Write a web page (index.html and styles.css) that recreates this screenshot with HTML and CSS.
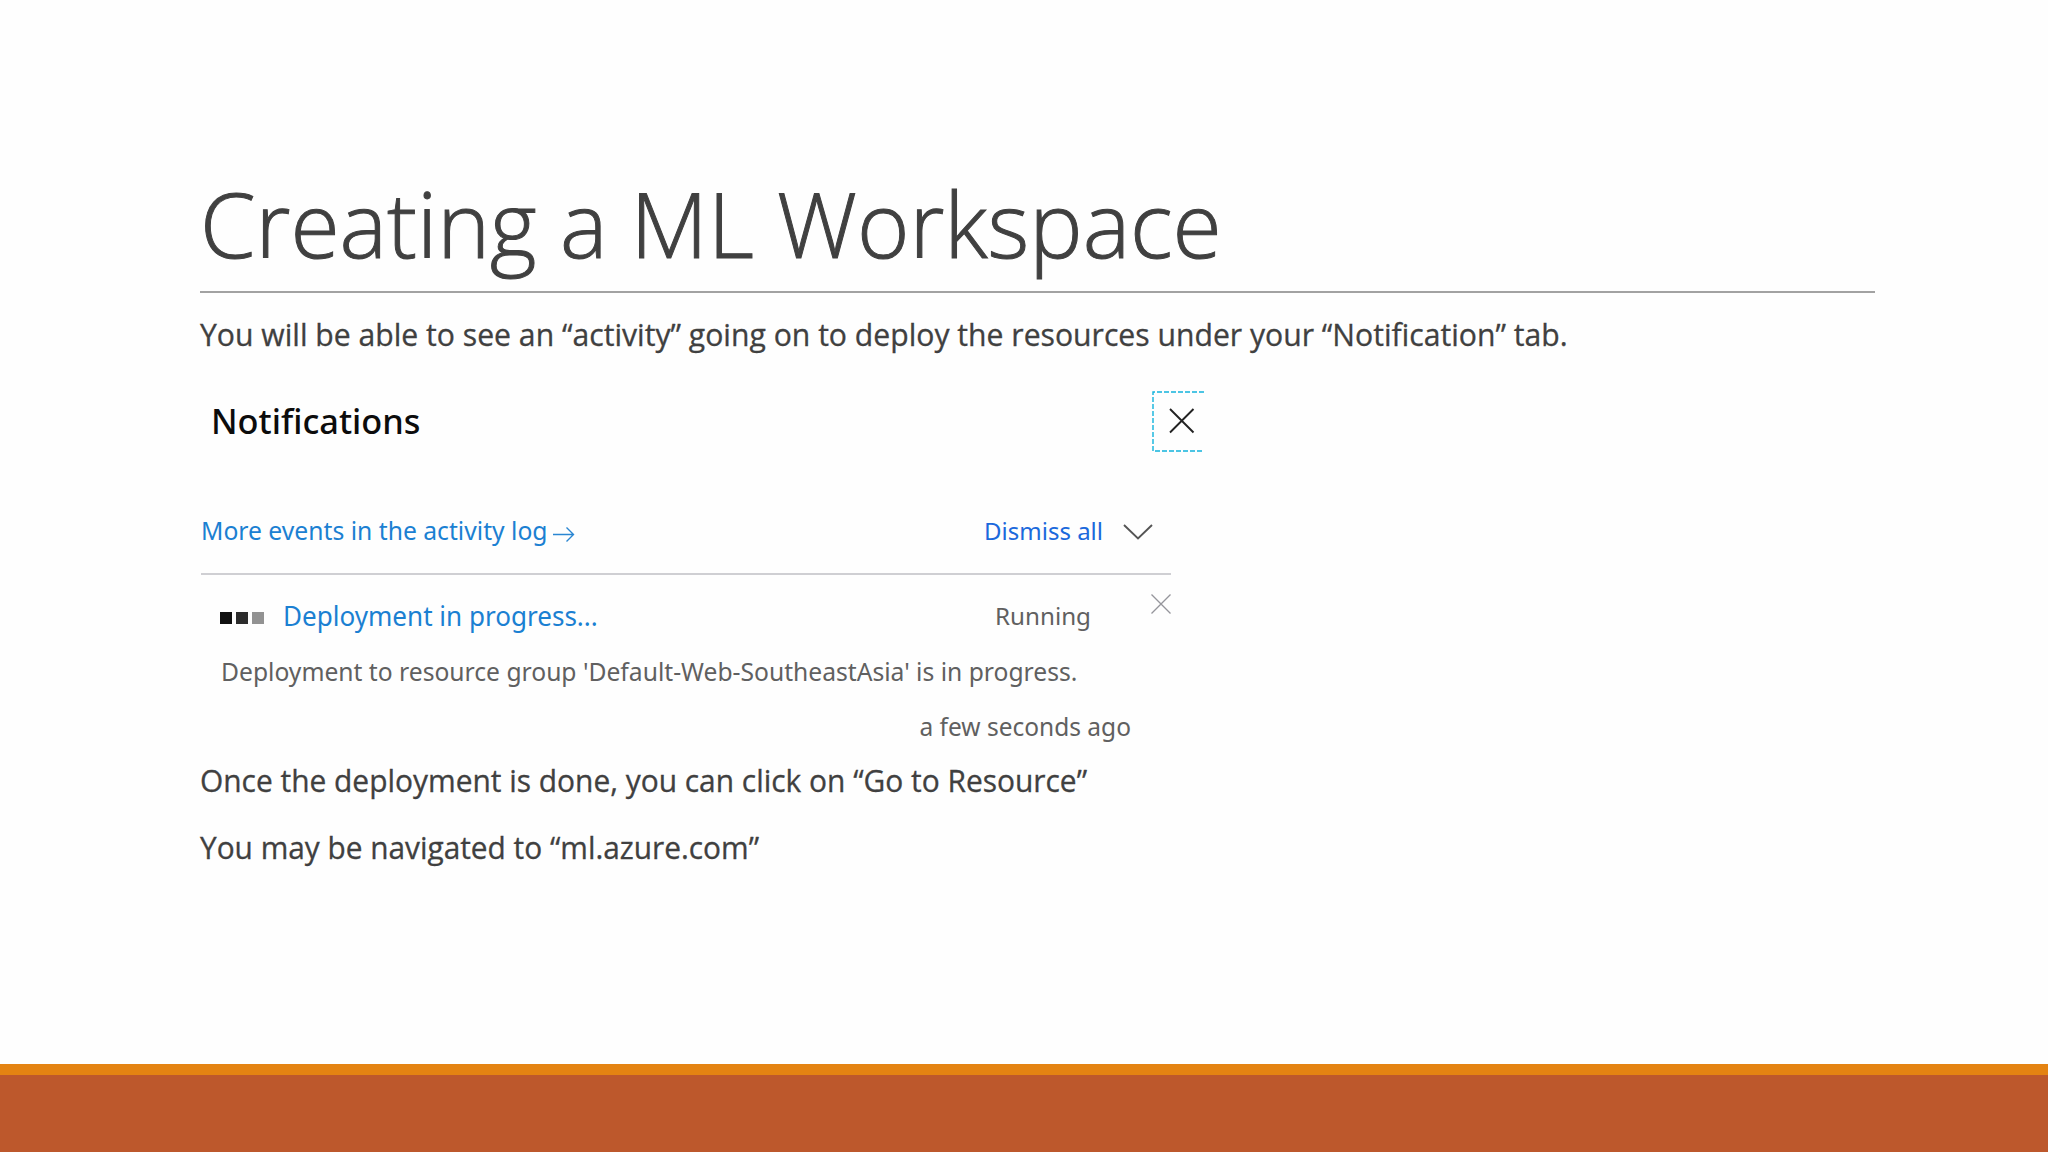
FILE: index.html
```
<!DOCTYPE html>
<html lang="en">
<head>
    <meta charset="UTF-8">
    <meta name="viewport" content="width=device-width, initial-scale=1.0">
    <title>Creating a ML Workspace</title>
    <link rel="stylesheet" href="styles.css">
</head>
<body>
    <main class="slide">
        <h1>Creating a ML Workspace</h1>

        <div class="content">
            <p class="intro">You will be able to see an “activity” going on to deploy the resources under your “Notification” tab.</p>

            <section class="notifications">
                <div class="panel-header">
                    <h2>Notifications</h2>
                    <div class="close-box">
                        <svg width="52" height="61" viewBox="0 0 52 61" fill="none">
                            <path d="M52 1H1V60H52" stroke="#12b3dc" stroke-width="1.4" stroke-dasharray="5 2"/>
                            <path d="M18 18L41.500 41.500M41.500 18L18 41.500" stroke="#222" stroke-width="1.900"/>
                        </svg>
                    </div>
                </div>

                <div class="panel-actions">
                    <a class="activity-link"><span>More events in the activity log</span>
                        <svg width="22" height="16" viewBox="0 0 22 16" fill="none" stroke="#2a86d2" stroke-width="1.400">
                            <path d="M0 8.500H20.500M13.500 1.500L20.500 8.500L13.500 15.500"/>
                        </svg>
                    </a>
                    <a class="dismiss-link"><span>Dismiss all</span>
                        <svg width="30" height="16" viewBox="0 0 30 16" fill="none" stroke="#555" stroke-width="1.900">
                            <path d="M1 1L15 14.500L29 1"/>
                        </svg>
                    </a>
                </div>

                <div class="item">
                    <div class="item-header">
                        <div class="progress-dots"><i></i><i></i><i></i></div>
                        <a class="item-title">Deployment in progress...</a>
                        <span class="status">Running</span>
                        <svg class="item-close" width="20" height="20" viewBox="0 0 20 20" fill="none" stroke="#95959b" stroke-width="1.300">
                            <path d="M.5.5L19.500 19.500M19.500.5L.5 19.500"/>
                        </svg>
                    </div>
                    <p class="item-text">Deployment to resource group 'Default-Web-SoutheastAsia' is in progress.</p>
                    <p class="item-time">a few seconds ago</p>
                </div>
            </section>

            <p class="step-resource">Once the deployment is done, you can click on “Go to Resource”</p>
            <p class="step-navigate">You may be navigated to “ml.azure.com”</p>
        </div>
    </main>
    <footer class="band"></footer>
</body>
</html>
```
FILE: styles.css
```
* {
    box-sizing: border-box;
}

body {
    margin: 0;
    height: 1152px;
    display: flex;
    flex-direction: column;
    overflow: hidden;
    background: #fefefe;
    color: #404040;
    font-family: "Open Sans", sans-serif;
}

h1, h2, p {
    margin: 0;
    white-space: nowrap;
    transform-origin: left center;
}

.slide {
    flex: 1;
    padding: 158px 173px 0 200px;
}

h1 {
    height: 133px;
    font-size: 91px;
    font-weight: 300;
    line-height: 130px;
    transform: scaleX(0.984);
    -webkit-text-stroke: 1px #404040;
}

.content {
    border-top: 2px solid #a2a2a2;
    padding-top: 22px;
    font-size: 30.4px;
    line-height: 40px;
}

.intro,
.step-resource,
.step-navigate {
    -webkit-text-stroke: 0.3px #404040;
}

.intro {
    transform: scaleX(0.992);
}

.step-resource {
    margin-top: 14px;
    transform: scaleX(0.984);
}

.step-navigate {
    margin-top: 27px;
    transform: scaleX(0.981);
}

/* Azure notifications panel */
.notifications {
    width: 1004px;
    padding-left: 1px;
    margin-top: 36px;
    font-family: "Noto Sans", sans-serif;
    color: #606060;
}

.panel-header {
    display: flex;
    justify-content: space-between;
    height: 61px;
}

h2 {
    padding-left: 10px;
    font-size: 34.3px;
    font-weight: 500;
    line-height: 59px;
    color: #0c0c0c;
}

.close-box svg {
    display: block;
}

.panel-actions {
    display: flex;
    justify-content: space-between;
    width: 970px;
    height: 123px;
    padding: 59px 18px 0 0;
    border-bottom: 2px solid #cfcfd3;
    font-size: 24.7px;
    line-height: 40px;
}

.activity-link,
.dismiss-link {
    display: flex;
}

.activity-link {
    gap: 5px;
    color: #1b80d2;
}

.activity-link svg {
    margin-top: 15px;
}

.dismiss-link {
    gap: 20px;
    font-size: 24px;
    color: #1b69dc;
}

.dismiss-link svg {
    margin-top: 13px;
}

.item {
    width: 970px;
    height: 172px;
    padding: 19px 0 0 19px;
}

.item-header {
    display: flex;
    height: 42px;
    line-height: 44px;
}

.progress-dots {
    display: flex;
    gap: 4px;
    margin: 18px 19px 0 0;
}

.progress-dots i {
    width: 12px;
    height: 12px;
    background: #101010;
}

.progress-dots i:nth-child(2) {
    background: #2c2c2c;
}

.progress-dots i:nth-child(3) {
    background: #929292;
}

.item-title {
    width: 712px;
    font-size: 27px;
    color: #1b80d2;
    transform: scaleX(0.965);
    transform-origin: left center;
    white-space: nowrap;
}

.status {
    font-size: 24.2px;
}

.item-close {
    margin-left: auto;
}

.item-text {
    padding: 16px 0 0 1px;
    font-size: 24.65px;
    line-height: 40px;
}

.item-time {
    padding: 15px 40px 0 0;
    font-size: 24.5px;
    line-height: 40px;
    text-align: right;
}

.band {
    height: 88px;
    border-top: 11px solid #e48312;
    background: #bd582c;
}
```
